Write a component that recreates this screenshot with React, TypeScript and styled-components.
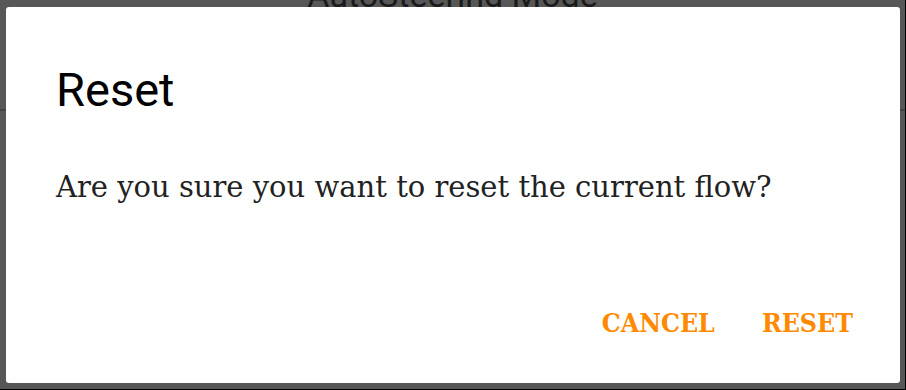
import React from "react";
import styled, { createGlobalStyle } from "styled-components";

const GlobalStyle = createGlobalStyle`
  html, body {
    margin: 0;
    padding: 0;
    background: #000;
  }
  #root {
    width: 906px;
    height: 390px;
  }
`;

const Screen = styled.div`
  position: relative;
  width: 905px;
  height: 389px;
  overflow: hidden;
  background: #575757;
  font-family: Roboto, "Noto Sans", sans-serif;
`;

const AppHeader = styled.header`
  height: 109px;
  border-bottom: 2px solid #434343;
  display: flex;
  justify-content: center;
  align-items: flex-start;
`;

const AppTitle = styled.h1`
  margin: -26px 0 0 0;
  font-family: Roboto, sans-serif;
  font-weight: 400;
  font-size: 34px;
  line-height: 42px;
  color: #1b1b1b;
`;

const Dialog = styled.div`
  position: absolute;
  left: 6px;
  top: 7px;
  width: 894px;
  height: 376px;
  box-sizing: border-box;
  background: #fff;
  border-radius: 3px;
  padding: 56px 47px 0 50px;
  display: flex;
  flex-direction: column;
`;

const DialogTitle = styled.h2`
  margin: 0;
  font-family: Roboto, sans-serif;
  font-weight: 400;
  font-size: 47px;
  line-height: 54px;
  color: #000;
`;

const DialogBody = styled.p`
  margin: 52px 0 0 0;
  font-family: "Roboto Slab", "DejaVu Serif", serif;
  font-size: 29px;
  line-height: 36px;
  color: #222;
`;

const Actions = styled.div`
  margin-top: auto;
  margin-bottom: 44px;
  display: flex;
  justify-content: flex-end;
  gap: 47px;
`;

const ActionButton = styled.button`
  border: none;
  background: none;
  padding: 0;
  font-family: "Roboto Slab", "DejaVu Serif Condensed", "DejaVu Serif", serif;
  font-weight: 700;
  font-size: 26.5px;
  line-height: 32px;
  color: #ff8a00;
  text-transform: uppercase;
  cursor: pointer;
`;

export default function App() {
  return (
    <>
      <GlobalStyle />
      <Screen>
        <AppHeader>
          <AppTitle>AutoSteering Mode</AppTitle>
        </AppHeader>
        <Dialog role="dialog" aria-labelledby="reset-title">
          <DialogTitle id="reset-title">Reset</DialogTitle>
          <DialogBody>Are you sure you want to reset the current flow?</DialogBody>
          <Actions>
            <ActionButton>Cancel</ActionButton>
            <ActionButton>Reset</ActionButton>
          </Actions>
        </Dialog>
      </Screen>
    </>
  );
}
